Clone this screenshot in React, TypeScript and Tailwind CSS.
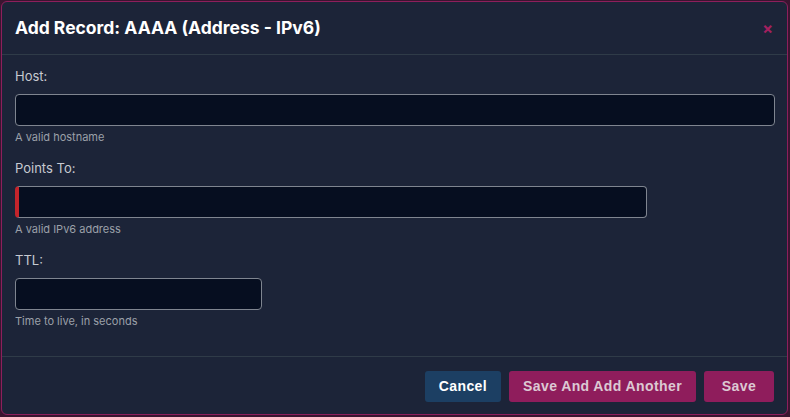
export default function App() {
  return (
    <div className="h-[417px] w-[790px] bg-[#3a1530] p-px" style={{ fontFamily: "Inter, 'Noto Sans', sans-serif" }}>
      <div className="flex h-[414px] w-[787px] flex-col rounded-md border border-[#8d1f5c] bg-[#1c2438]">
        <div className="flex h-[53px] items-center justify-between border-b border-[#2f3b48] pl-[13px] pr-[14px]">
          <h2 className="text-[17.5px] font-bold text-white">Add Record: AAAA (Address - IPv6)</h2>
          <button className="text-[16px] font-bold leading-none text-[#a3205f]">×</button>
        </div>
        <div className="flex flex-1 flex-col px-[13px] pt-[12px]">
          <Field label="Host:" help="A valid hostname" width="w-[760px]" />
          <Field label="Points To:" help="A valid IPv6 address" width="w-[632px]" invalid />
          <Field label="TTL:" help="Time to live, in seconds" width="w-[247px]" />
        </div>
        <div className="flex h-[58px] items-start justify-end gap-2 border-t border-[#2f3b48] pr-[13px] pt-[14px]">
          <button
            className="h-[31px] rounded-[3px] bg-[#1c3f63] px-[14px] text-[14px] font-bold tracking-[0.4px] text-white"
            style={{ fontFamily: "'Liberation Sans', Arial, sans-serif" }}
          >
            Cancel
          </button>
          <button
            className="h-[31px] rounded-[3px] bg-[#8f1d5c] px-[14px] text-[14px] font-bold tracking-[0.4px] text-[#dcc9d3]"
            style={{ fontFamily: "'Liberation Sans', Arial, sans-serif" }}
          >
            Save And Add Another
          </button>
          <button
            className="h-[31px] w-[70px] rounded-[3px] bg-[#8f1d5c] text-[14px] font-bold tracking-[0.4px] text-[#dcc9d3]"
            style={{ fontFamily: "'Liberation Sans', Arial, sans-serif" }}
          >
            Save
          </button>
        </div>
      </div>
    </div>
  );
}

function Field({ label, help, width, invalid }: { label: string; help: string; width: string; invalid?: boolean }) {
  return (
    <div className="mb-[14px] flex flex-col">
      <label className="mb-[9px] text-[13px] leading-[18px] text-[#c7cad1]">{label}</label>
      <input
        className={`${width} h-[32px] rounded-[4px] border border-[#7f8590] bg-[#060e20] px-2 text-white outline-none ${invalid ? "border-l-[4px] border-l-[#c4242b]" : ""}`}
      />
      <span className="mt-[3px] text-[11px] leading-[16px] text-[#9ba0a9]">{help}</span>
    </div>
  );
}
